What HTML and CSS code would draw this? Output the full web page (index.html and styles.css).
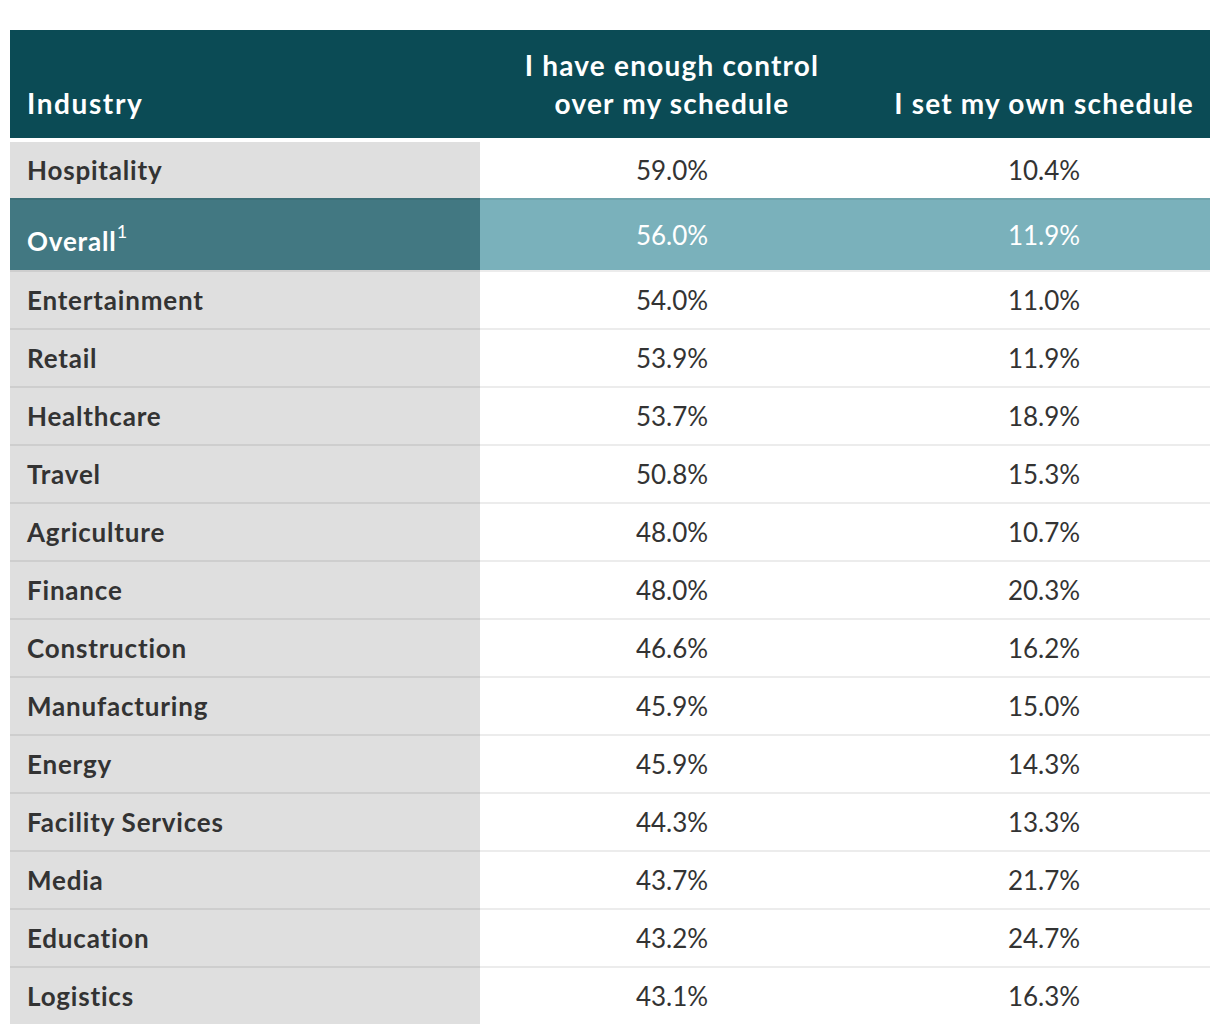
FILE: index.html
```html
<!DOCTYPE html>
<html lang="en">
<head>
<meta charset="utf-8">
<title>Schedule control by industry</title>
<link rel="stylesheet" href="styles.css">
</head>
<body>
<div class="table">
  <div class="row head">
    <div class="cell label">Industry</div>
    <div class="cell num">I have enough control<br>over my schedule</div>
    <div class="cell num c3">I set my own schedule</div>
  </div>
  <div class="body">
    <div class="row first"><div class="cell label">Hospitality</div><div class="cell num">59.0%</div><div class="cell num c3">10.4%</div></div>
    <div class="row overall"><div class="cell label"><span class="ov">Overal<span class="tight">l</span><sup>1</sup></span></div><div class="cell num">56.0%</div><div class="cell num c3">11.9%</div></div>
    <div class="row"><div class="cell label">Entertainment</div><div class="cell num">54.0%</div><div class="cell num c3">11.0%</div></div>
    <div class="row"><div class="cell label">Retail</div><div class="cell num">53.9%</div><div class="cell num c3">11.9%</div></div>
    <div class="row"><div class="cell label">Healthcare</div><div class="cell num">53.7%</div><div class="cell num c3">18.9%</div></div>
    <div class="row"><div class="cell label">Travel</div><div class="cell num">50.8%</div><div class="cell num c3">15.3%</div></div>
    <div class="row"><div class="cell label">Agriculture</div><div class="cell num">48.0%</div><div class="cell num c3">10.7%</div></div>
    <div class="row"><div class="cell label">Finance</div><div class="cell num">48.0%</div><div class="cell num c3">20.3%</div></div>
    <div class="row"><div class="cell label">Construction</div><div class="cell num">46.6%</div><div class="cell num c3">16.2%</div></div>
    <div class="row"><div class="cell label">Manufacturing</div><div class="cell num">45.9%</div><div class="cell num c3">15.0%</div></div>
    <div class="row"><div class="cell label">Energy</div><div class="cell num">45.9%</div><div class="cell num c3">14.3%</div></div>
    <div class="row"><div class="cell label">Facility Services</div><div class="cell num">44.3%</div><div class="cell num c3">13.3%</div></div>
    <div class="row"><div class="cell label">Media</div><div class="cell num">43.7%</div><div class="cell num c3">21.7%</div></div>
    <div class="row"><div class="cell label">Education</div><div class="cell num">43.2%</div><div class="cell num c3">24.7%</div></div>
    <div class="row"><div class="cell label">Logistics</div><div class="cell num">43.1%</div><div class="cell num c3">16.3%</div></div>
  </div>
</div>
</body>
</html>
```
FILE: styles.css
```css
html, body {
  margin: 0;
  padding: 0;
  background: #ffffff;
}
body {
  font-family: "Lato", "Open Sans", "Liberation Sans", sans-serif;
  color: #333333;
}
.table {
  width: 1200px;
  margin: 30px 10px 0;
}
.row {
  display: grid;
  grid-template-columns: 470px 384px 346px;
}
.cell {
  display: flex;
  align-items: center;
  box-sizing: border-box;
}
.num {
  justify-content: center;
  text-align: center;
  font-size: 26px;
  font-weight: 400;
}
.c3 {
  padding-left: 14px;
}
.label {
  padding-left: 17px;
  font-size: 26px;
  font-weight: 700;
  letter-spacing: 0.8px;
}

/* header */
.head {
  background: #0b4b55;
  height: 108px;
  color: #ffffff;
}
.head .cell {
  align-items: flex-end;
  padding-bottom: 16px;
  font-size: 28px;
  font-weight: 700;
  line-height: 38px;
  letter-spacing: 1.2px;
}
.head .label {
  letter-spacing: 1.6px;
}

.body {
  margin-top: 4px;
}
.body .cell {
  height: 58px;
  border-top: 2px solid rgba(0, 0, 0, 0.075);
}
.body .label {
  background: #dfdfdf;
}
.body .first .cell {
  height: 56px;
  border-top: 0;
}
.body .overall .cell {
  height: 72px;
  color: #ffffff;
  background: #7ab1bb;
  border-top-color: rgba(0, 0, 0, 0.07);
}
.body .overall .label {
  background: #427882;
}
.ov {
  padding-top: 12px;
}
.tight {
  letter-spacing: 0;
}
.overall sup {
  font-size: 18px;
  font-weight: 400;
  letter-spacing: 0;
  line-height: 0;
  position: relative;
  top: -3px;
  margin-left: 1px;
  vertical-align: super;
}
```
